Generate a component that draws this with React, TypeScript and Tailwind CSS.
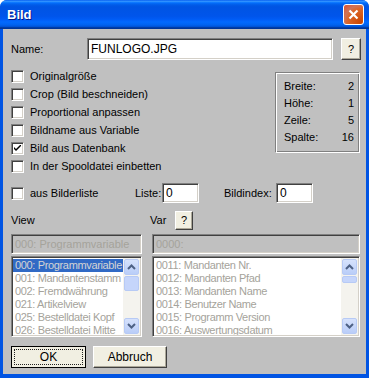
import React from "react";

const sunken =
  "border border-t-[#808080] border-l-[#808080] border-b-white border-r-white shadow-[inset_1px_1px_0_#404040,inset_-1px_-1px_0_#d4d0c8]";

const xpBtn =
  "flex items-center justify-center bg-[#f1efe2] border border-t-white border-l-white border-b-[#404040] border-r-[#404040] shadow-[inset_-1px_-1px_0_#aca899]";

const viewItems = [
  "000: Programmvariable",
  "001: Mandantenstamm",
  "002: Fremdwährung",
  "021: Artikelview",
  "025: Bestelldatei Kopf",
  "026: Bestelldatei Mitte",
];

const varItems = [
  "0011: Mandanten Nr.",
  "0012: Mandanten Pfad",
  "0013: Mandanten Name",
  "0014: Benutzer Name",
  "0015: Programm Version",
  "0016: Auswertungsdatum",
];

const checks = [
  { label: "Originalgröße", on: false },
  { label: "Crop (Bild beschneiden)", on: false },
  { label: "Proportional anpassen", on: false },
  { label: "Bildname aus Variable", on: false },
  { label: "Bild aus Datenbank", on: true },
  { label: "In der Spooldatei einbetten", on: false },
];

const info = [
  ["Breite:", "2"],
  ["Höhe:", "1"],
  ["Zeile:", "5"],
  ["Spalte:", "16"],
];

function Check({ on }: { on?: boolean }) {
  return (
    <div className={`w-[13px] h-[13px] bg-white shrink-0 ${sunken} flex items-center justify-center`}>
      {on && (
        <svg width="7" height="7" viewBox="0 0 7 7">
          <path d="M0 2 L0 4 L2 6 L7 1 L7 -1 L2 4 Z" fill="#000" />
        </svg>
      )}
    </div>
  );
}

function Arrow({ up }: { up?: boolean }) {
  return (
    <div className="h-[16px] mx-[1px] rounded-[2px] border border-[#b7caf5] bg-[linear-gradient(to_bottom,#d6e2fc,#b9cdf8)] flex items-center justify-center">
      <svg width="9" height="6" viewBox="0 0 9 6">
        <path
          d={up ? "M1 5 L4.5 1.5 L8 5" : "M1 1 L4.5 4.5 L8 1"}
          stroke="#4d6185"
          strokeWidth="2"
          fill="none"
        />
      </svg>
    </div>
  );
}

function ScrollBar({ thumb }: { thumb: number }) {
  return (
    <div className="w-[17px] h-full flex flex-col bg-[#f4f3ee] py-[1px]">
      <Arrow up />
      <div className="flex-1 pt-[1px]">
        <div
          className="mx-[1px] rounded-[2px] border border-[#b7caf5] bg-[#c5d5fb]"
          style={{ height: thumb }}
        />
      </div>
      <Arrow />
    </div>
  );
}

function List({ items, width, thumb, sel }: { items: string[]; width: string; thumb: number; sel?: boolean }) {
  return (
    <div className={`${width} h-[81px] bg-white ${sunken} p-[1px] flex`}>
      <div className="flex-1 pt-[1px] overflow-hidden">
        {items.map((t, i) => (
          <div
            key={t}
            className={`h-[13px] leading-[13px] pl-[2px] whitespace-nowrap tracking-[-0.35px] ${
              i === 0 && sel ? "bg-[#316ac5] text-[#d4d4d4]" : "text-[#a5a39b]"
            }`}
          >
            {t}
          </div>
        ))}
      </div>
      <ScrollBar thumb={thumb} />
    </div>
  );
}

export default function App() {
  return (
    <div className="w-[369px] h-[378px] flex flex-col bg-[#0054e3] rounded-t-[7px] overflow-hidden font-['Liberation_Sans',Arial,sans-serif] text-[11px] text-black">
      {/* title bar */}
      <div className="h-[29px] shrink-0 flex items-center pl-[7px] pr-[5px] bg-[linear-gradient(to_bottom,#0058ee_0%,#3593ff_4%,#288eff_6%,#127dff_8%,#036ffc_10%,#0262ee_14%,#0057e5_20%,#0054e3_24%,#0055eb_56%,#005bf5_66%,#026afe_76%,#0062ef_86%,#0052d6_92%,#0040ab_94%,#003092_100%)]">
        <span className="text-white font-bold text-[13px] [text-shadow:1px_1px_0_#0a1883]">Bild</span>
        <div className="ml-auto w-[21px] h-[21px] rounded-[3px] border border-white bg-[radial-gradient(circle_at_90%_90%,#cc4600_0%,#dc6527_55%,#cd7359_70%,#e0502d_100%)] flex items-center justify-center">
          <svg width="11" height="11" viewBox="0 0 11 11">
            <path d="M1.5 1.5 L9.5 9.5 M9.5 1.5 L1.5 9.5" stroke="#fff" strokeWidth="2.2" />
          </svg>
        </div>
      </div>

      {/* body */}
      <div className="flex-1 mx-[3px] mb-[4px] bg-[#c0c0c0] pl-[8px] pr-[5px] pt-[9px] flex flex-col">
        <div className="h-[22px] flex items-center">
          <span className="w-[76px]">Name:</span>
          <div className={`w-[246px] h-[22px] bg-white ${sunken} flex items-center pl-[3px] text-[12px]`}>
            FUNLOGO.JPG
          </div>
          <div className={`ml-[8px] w-[20px] h-[22px] ${xpBtn}`}>?</div>
        </div>

        <div className="mt-[10px] flex">
          <div className="flex flex-col gap-[5px]">
            {checks.map((c) => (
              <div key={c.label} className="h-[13px] flex items-center gap-[6px] leading-[13px]">
                <Check on={c.on} />
                <span>{c.label}</span>
              </div>
            ))}
          </div>
          <div className="ml-auto mr-[1px] mt-[2px] w-[85px] h-[81px] border border-t-[#808080] border-l-[#808080] border-b-white border-r-white shadow-[inset_1px_1px_0_#fff,inset_-1px_-1px_0_#808080] pl-[8px] pr-[5px] pt-[5px] flex flex-col">
            {info.map(([k, v]) => (
              <div key={k} className="h-[17px] flex items-center justify-between">
                <span>{k}</span>
                <span>{v}</span>
              </div>
            ))}
          </div>
        </div>

        <div className="mt-[10px] h-[20px] flex items-center">
          <div className="w-[124px] flex items-center gap-[6px]">
            <Check />
            <span>aus Bilderliste</span>
          </div>
          <span className="w-[27px]">Liste:</span>
          <div className={`w-[37px] h-[20px] bg-white ${sunken} flex items-center pl-[3px] text-[12px]`}>0</div>
          <span className="ml-[25px] w-[52px]">Bildindex:</span>
          <div className={`w-[37px] h-[20px] bg-white ${sunken} flex items-center pl-[3px] text-[12px]`}>0</div>
        </div>

        <div className="mt-[8px] h-[19px] flex items-center">
          <span className="w-[139px]">View</span>
          <span className="w-[25px]">Var</span>
          <div className={`w-[18px] h-[19px] ${xpBtn}`}>?</div>
        </div>

        <div className="mt-[4px] h-[20px] flex gap-[10px]">
          <div className={`w-[131px] h-[20px] ${sunken} flex items-center pl-[3px] text-[#a5a39b] whitespace-nowrap`}>
            000: Programmvariable
          </div>
          <div className={`w-[208px] h-[20px] ${sunken} flex items-center pl-[3px] text-[#a5a39b]`}>0000:</div>
        </div>

        <div className="mt-[2px] flex gap-[10px]">
          <List items={viewItems} width="w-[131px]" thumb={15} sel />
          <List items={varItems} width="w-[208px]" thumb={7} />
        </div>

        <div className="mt-[9px] h-[22px] flex gap-[7px]">
          <div className="w-[75px] h-[22px] border border-black bg-[#f1efe2] p-[2px]">
            <div className="w-full h-full border border-dotted border-[#202020] flex items-center justify-center text-[12px]">
              OK
            </div>
          </div>
          <div className={`w-[74px] h-[22px] ${xpBtn} text-[12px]`}>Abbruch</div>
        </div>
      </div>
    </div>
  );
}
